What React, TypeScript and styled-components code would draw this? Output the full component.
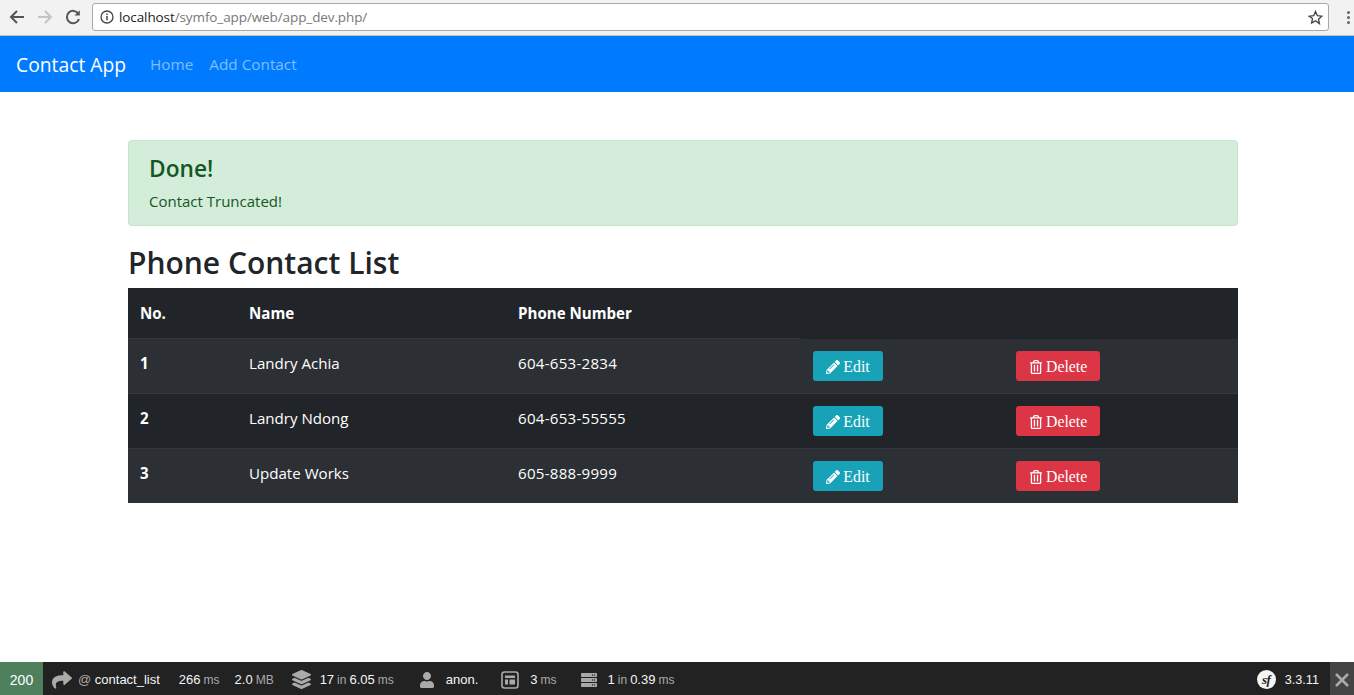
import styled, { createGlobalStyle } from "styled-components";
import { FaPencilAlt, FaRegTrashAlt, FaLayerGroup, FaUser, FaServer, FaShare } from "react-icons/fa";

const GlobalStyle = createGlobalStyle`
  html, body { margin: 0; padding: 0; height: 100%; background: #fff; }
  #root { height: 100%; }
  * { box-sizing: border-box; }
`;

const sans = `"Open Sans", "Noto Sans", "Liberation Sans", sans-serif`;
const arial = `"Liberation Sans", Arial, sans-serif`;

const Page = styled.div`
  display: flex;
  flex-direction: column;
  height: 695px;
  overflow: hidden;
  font-family: ${sans};
`;

/* browser chrome */
const BrowserBar = styled.div`
  height: 36px;
  flex: none;
  display: flex;
  align-items: center;
  padding: 0 0 1px 8px;
  background: #f2f2f2;
  border-bottom: 1px solid #c4c4c4;
`;
const NavIcon = styled.svg`
  width: 18px;
  height: 18px;
  margin-right: 10px;
  flex: none;
`;
const AddressBar = styled.div`
  flex: 1;
  height: 28px;
  padding: 0 5px 0 7px;
  display: flex;
  align-items: center;
  background: #fff;
  border: 1px solid #a9a9a9;
  border-radius: 3px;
  font-size: 13.5px;
  letter-spacing: -0.1px;
  color: #777;
`;
const Url = styled.span`
  margin-left: 5px;
  flex: 1;
  b { font-weight: 400; color: #222; }
`;
const MenuDots = styled.div`
  width: 25px;
  padding-left: 13px;
  flex: none;
  display: flex;
  flex-direction: column;
  align-items: center;
  gap: 2px;
  span { width: 3px; height: 3px; border-radius: 50%; background: #666; }
`;

/* navbar */
const Navbar = styled.nav`
  height: 56px;
  flex: none;
  display: flex;
  align-items: center;
  padding: 0 16px;
  background: #007bff;
`;
const Brand = styled.a`
  font-size: 19.3px;
  color: #fff;
  margin-right: 24px;
`;
const NavLink = styled.a`
  font-size: 15.3px;
  color: rgba(255, 255, 255, 0.5);
  margin-right: 16px;
  margin-top: -1px;
`;

/* content */
const Container = styled.main`
  flex: 1;
  width: 1110px;
  margin-left: 128px;
  padding-top: 48px;
`;
const Alert = styled.div`
  height: 86px;
  padding: 13px 20px 12px;
  background: #d4edda;
  border: 1px solid #c3e6cb;
  border-radius: 4px;
  color: #155724;
`;
const AlertTitle = styled.h4`
  margin: 0 0 6px;
  font-size: 22.7px;
  line-height: 30px;
  font-weight: 600;
`;
const AlertText = styled.p`
  margin: 0;
  font-size: 15px;
  line-height: 22px;
`;
const Title = styled.h2`
  margin: 16px 0 5px;
  font-size: 30px;
  line-height: 41px;
  font-weight: 600;
  color: #212529;
`;
const Table = styled.table`
  width: 100%;
  table-layout: fixed;
  border-collapse: collapse;
  background: #212529;
  color: #fff;
  font-size: 15.1px;
`;
const HeadCell = styled.th<{ $line?: boolean }>`
  height: 50px;
  padding: 0 12px;
  text-align: left;
  font-weight: 700;
  font-size: 15.1px;
  border-bottom: 1px solid ${(p) => (p.$line ? "#32383e" : "#212529")};
`;
const Row = styled.tr<{ $odd: boolean }>`
  height: 55px;
  background: ${(p) => (p.$odd ? "#2c3034" : "#212529")};
  border-top: 1px solid #32383e;
`;
const Cell = styled.td<{ $strong?: boolean }>`
  padding: 0 12px 5px;
  font-weight: ${(p) => (p.$strong ? 700 : 400)};
`;
const PhoneCell = styled(Cell)`
  letter-spacing: 0.25px;
`;
const ActionCell = styled.td`
  padding: 1px 12px 0;
`;
const Button = styled.a<{ $color: string }>`
  display: inline-flex;
  align-items: center;
  justify-content: center;
  gap: 3px;
  height: 30px;
  padding: 1px 13px 0;
  min-width: 70px;
  border-radius: 3px;
  background: ${(p) => p.$color};
  color: #fff;
  font-family: "Liberation Serif", "Times New Roman", serif;
  font-size: 15.8px;
  svg { width: 14px; height: 14px; }
`;

/* symfony toolbar */
const Toolbar = styled.footer`
  height: 33px;
  flex: none;
  display: flex;
  align-items: center;
  padding-top: 2px;
  background: #222;
  font-family: ${arial};
  font-size: 13px;
  color: #aaa;
`;
const Status = styled.div`
  width: 43px;
  height: 33px;
  margin-top: -2px;
  padding-top: 2px;
  display: flex;
  align-items: center;
  justify-content: center;
  background: #4f805d;
  color: #fff;
  font-size: 14px;
`;
const Block = styled.div<{ $gap?: number; $left: number }>`
  display: flex;
  align-items: center;
  margin-left: ${(p) => p.$left}px;
  gap: ${(p) => p.$gap ?? 3}px;
  white-space: nowrap;
  svg { color: #aaa; flex: none; }
  b { font-weight: 400; color: #f5f5f5; }
`;
const Unit = styled.span`
  font-size: 12px;
`;
const Spacer = styled.div`
  flex: 1;
`;
const SfLogo = styled.span`
  width: 19px;
  height: 19px;
  border-radius: 50%;
  background: #f5f5f5;
  color: #222;
  display: flex;
  align-items: center;
  justify-content: center;
  font-family: "Liberation Serif", serif;
  font-style: italic;
  font-weight: 700;
  font-size: 13px;
  letter-spacing: -0.5px;
`;
const Version = styled.b`
  font-size: 12.7px;
`;
const CloseBox = styled.div`
  width: 24px;
  height: 33px;
  margin-top: -2px;
  padding-top: 2px;
  margin-left: 11px;
  display: flex;
  align-items: center;
  justify-content: center;
  background: #444;
`;

const contacts = [
  { no: 1, name: "Landry Achia", phone: "604-653-2834" },
  { no: 2, name: "Landry Ndong", phone: "604-653-55555" },
  { no: 3, name: "Update Works", phone: "605-888-9999" },
];

export default function App() {
  return (
    <Page>
      <GlobalStyle />
      <BrowserBar>
        <NavIcon viewBox="0 0 18 18" fill="none" stroke="#555" strokeWidth="2">
          <path d="M16 9H3M9 3L3 9l6 6" />
        </NavIcon>
        <NavIcon viewBox="0 0 18 18" fill="none" stroke="#c4c4c4" strokeWidth="2">
          <path d="M2 9h13M9 3l6 6-6 6" />
        </NavIcon>
        <NavIcon viewBox="0 0 18 18" fill="none" stroke="#555" strokeWidth="2">
          <path d="M14.5 6A6.2 6.2 0 1 0 15 11" />
          <path d="M15.8 2.2v5.3h-5.3z" fill="#555" stroke="none" />
        </NavIcon>
        <AddressBar>
          <svg width="14" height="14" viewBox="0 0 14 14" fill="none">
            <circle cx="7" cy="7" r="6" stroke="#444" strokeWidth="1.3" />
            <path d="M7 6v4.2M7 3.6v1.4" stroke="#444" strokeWidth="1.5" />
          </svg>
          <Url>
            <b>localhost</b>/symfo_app/web/app_dev.php/
          </Url>
          <svg width="15" height="15" viewBox="0 0 24 24" fill="none" stroke="#444" strokeWidth="2.2">
            <path d="M12 2.5l3 6.6 7 .8-5.2 4.8 1.4 7.1L12 17.3l-6.2 3.5 1.4-7.1L2 9.9l7-.8z" />
          </svg>
        </AddressBar>
        <MenuDots>
          <span />
          <span />
          <span />
        </MenuDots>
      </BrowserBar>

      <Navbar>
        <Brand>Contact App</Brand>
        <NavLink>Home</NavLink>
        <NavLink>Add Contact</NavLink>
      </Navbar>

      <Container>
        <Alert>
          <AlertTitle>Done!</AlertTitle>
          <AlertText>Contact Truncated!</AlertText>
        </Alert>
        <Title>Phone Contact List</Title>
        <Table>
          <colgroup>
            <col style={{ width: 109 }} />
            <col style={{ width: 269 }} />
            <col style={{ width: 295 }} />
            <col style={{ width: 203 }} />
            <col />
          </colgroup>
          <thead>
            <tr>
              <HeadCell $line>No.</HeadCell>
              <HeadCell $line>Name</HeadCell>
              <HeadCell $line>Phone Number</HeadCell>
              <HeadCell />
              <HeadCell />
            </tr>
          </thead>
          <tbody>
            {contacts.map((c) => (
              <Row key={c.no} $odd={c.no % 2 === 1}>
                <Cell $strong>{c.no}</Cell>
                <Cell>{c.name}</Cell>
                <PhoneCell>{c.phone}</PhoneCell>
                <ActionCell>
                  <Button $color="#17a2b8">
                    <FaPencilAlt />
                    Edit
                  </Button>
                </ActionCell>
                <ActionCell>
                  <Button $color="#dc3545">
                    <FaRegTrashAlt />
                    Delete
                  </Button>
                </ActionCell>
              </Row>
            ))}
          </tbody>
        </Table>
      </Container>

      <Toolbar>
        <Status>200</Status>
        <Block $left={9} $gap={6}>
          <FaShare size={20} />
          <span>
            @ <b>contact_list</b>
          </span>
        </Block>
        <Block $left={19}>
          <b>266</b> <Unit>ms</Unit>
        </Block>
        <Block $left={15}>
          <b>2.0</b> <Unit>MB</Unit>
        </Block>
        <Block $left={18} $gap={3}>
          <FaLayerGroup size={19} style={{ marginRight: 6 }} />
          <b>17</b> <Unit>in</Unit> <b>6.05</b> <Unit>ms</Unit>
        </Block>
        <Block $left={25}>
          <FaUser size={16} style={{ marginRight: 8 }} />
          <b>anon.</b>
        </Block>
        <Block $left={23}>
          <svg width="18" height="18" viewBox="0 0 18 18" fill="none" style={{ marginRight: 8 }}>
            <rect x="1" y="1" width="16" height="16" rx="2.5" stroke="#aaa" strokeWidth="1.6" />
            <path d="M4 4.5h10V7H4zM4 8.5h3v5H4zM8.5 8.5H14v5H8.5z" fill="#aaa" />
          </svg>
          <b>3</b> <Unit>ms</Unit>
        </Block>
        <Block $left={24}>
          <FaServer size={16} style={{ marginRight: 8 }} />
          <b>1</b> <Unit>in</Unit> <b>0.39</b> <Unit>ms</Unit>
        </Block>
        <Spacer />
        <Block $left={0} $gap={9}>
          <SfLogo>sf</SfLogo>
          <Version>3.3.11</Version>
        </Block>
        <CloseBox>
          <svg width="14" height="14" viewBox="0 0 14 14" stroke="#aaa" strokeWidth="2.6">
            <path d="M1 1l12 12M13 1L1 13" />
          </svg>
        </CloseBox>
      </Toolbar>
    </Page>
  );
}
